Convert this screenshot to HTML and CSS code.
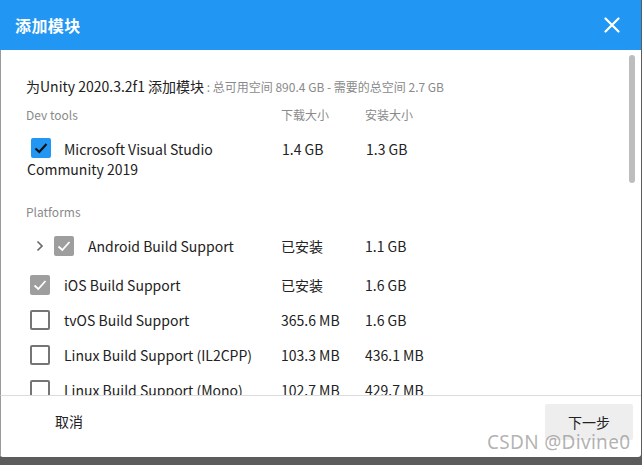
FILE: index.html
```html
<!DOCTYPE html>
<html lang="zh-CN">
<head>
<meta charset="utf-8">
<title>添加模块</title>
<link rel="stylesheet" href="styles.css">
</head>
<body>
<div class="dialog">
  <header class="head">
    <h1 class="title">添加模块</h1>
    <svg class="close" width="16" height="16" viewBox="0 0 16 16"><path d="M1.5 1.5 L14.5 14.5 M14.5 1.5 L1.5 14.5" stroke="#fff" stroke-width="2.2" stroke-linecap="round"/></svg>
  </header>
  <main class="body">
    <div class="scroll">
      <p class="intro">为Unity 2020.3.2f1 添加模块<span class="space"> : 总可用空间 890.4 GB - 需要的总空间 2.7 GB</span></p>
      <div class="row label-row first-label">
        <div class="c-name">Dev tools</div>
        <div class="c-dl">下载大小</div>
        <div class="c-in">安装大小</div>
      </div>
      <div class="row vs-row">
        <div class="c-name"><span class="cb cb-blue"><svg width="20" height="20" viewBox="0 0 20 20"><path d="M4.5 10.5 L8.3 14 L15.5 6" fill="none" stroke="#111" stroke-width="2.2"/></svg></span>Microsoft Visual Studio Community 2019</div>
        <div class="c-dl">1.4 GB</div>
        <div class="c-in">1.3 GB</div>
      </div>
      <div class="row label-row plat-label">
        <div class="c-name">Platforms</div>
      </div>
      <div class="row item android">
        <div class="c-name flexname"><svg class="chev" width="8" height="12" viewBox="0 0 8 12"><path d="M1.5 1.5 L6 6 L1.5 10.5" fill="none" stroke="#666" stroke-width="1.6"/></svg><span class="cb cb-gray"><svg width="20" height="20" viewBox="0 0 20 20"><path d="M4.5 10.5 L8.3 14 L15.5 6" fill="none" stroke="#fff" stroke-width="1.8"/></svg></span>Android Build Support</div>
        <div class="c-dl">已安装</div>
        <div class="c-in">1.1 GB</div>
      </div>
      <div class="row item ios">
        <div class="c-name flexname"><span class="cb cb-gray"><svg width="20" height="20" viewBox="0 0 20 20"><path d="M4.5 10.5 L8.3 14 L15.5 6" fill="none" stroke="#fff" stroke-width="1.8"/></svg></span>iOS Build Support</div>
        <div class="c-dl">已安装</div>
        <div class="c-in">1.6 GB</div>
      </div>
      <div class="row item">
        <div class="c-name flexname"><span class="cb cb-empty"></span>tvOS Build Support</div>
        <div class="c-dl">365.6 MB</div>
        <div class="c-in">1.6 GB</div>
      </div>
      <div class="row item">
        <div class="c-name flexname"><span class="cb cb-empty"></span>Linux Build Support (IL2CPP)</div>
        <div class="c-dl">103.3 MB</div>
        <div class="c-in">436.1 MB</div>
      </div>
      <div class="row item">
        <div class="c-name flexname"><span class="cb cb-empty"></span>Linux Build Support (Mono)</div>
        <div class="c-dl">102.7 MB</div>
        <div class="c-in">429.7 MB</div>
      </div>
    </div>
    <div class="thumb"></div>
  </main>
  <footer class="foot">
    <span class="cancel">取消</span>
    <span class="next">下一步</span>
  </footer>
</div>
<div class="watermark">CSDN @Divine0</div>
</body>
</html>
```
FILE: styles.css
```css
html, body {
  margin: 0;
  padding: 0;
}
body {
  width: 642px;
  height: 465px;
  background: #5c5c5c;
  font-family: "Noto Sans CJK SC", "Noto Sans", sans-serif;
  color: #222;
  position: relative;
  overflow: hidden;
}
.dialog {
  width: 641px;
  height: 457px;
  background: #fff;
  border-radius: 0 0 3px 3px;
  display: flex;
  flex-direction: column;
  overflow: hidden;
}
.head {
  height: 50px;
  flex: none;
  background: #2196f3;
  display: flex;
  align-items: center;
  justify-content: space-between;
  padding: 0 21px 0 15px;
}
.title {
  margin: 0;
  font-size: 16px;
  font-weight: 700;
  color: #fff;
  line-height: 20px;
  letter-spacing: 0.4px;
}
.close {
  display: block;
  margin-top: -1px;
}
.body {
  flex: none;
  height: 345px;
  position: relative;
  overflow: hidden;
  border-left: 1px solid #9a9a9a;
}
.scroll {
  padding: 26px 0 0 25px;
}
.intro {
  margin: 0;
  font-size: 14px;
  line-height: 20px;
  color: #222;
}
.space {
  font-size: 12px;
  color: #8a8a8a;
}
.row {
  display: flex;
  align-items: center;
}
.c-name {
  width: 255px;
  flex: none;
}
.c-dl {
  width: 84px;
  flex: none;
}
.c-in {
  flex: none;
}
.label-row {
  font-size: 12px;
  line-height: 18px;
  color: #8a8a8a;
}
.first-label {
  margin-top: 9px;
}
.plat-label {
  margin-top: 24px;
}
.vs-row {
  margin-top: 15px;
  align-items: flex-start;
  font-size: 14px;
  line-height: 20px;
}
.vs-row .c-name {
  padding-right: 20px;
  box-sizing: border-box;
  margin-left: 1px;
}
.vs-row .cb {
  display: inline-block;
  vertical-align: top;
  margin: 0 13px 0 4px;
  position: relative;
  top: -1px;
}
.cb {
  width: 20px;
  height: 20px;
  border-radius: 2px;
  box-sizing: border-box;
  flex: none;
}
.cb svg {
  display: block;
}
.cb-blue {
  background: #2196f3;
}
.cb-gray {
  background: #9e9e9e;
}
.cb-empty {
  border: 2px solid #757575;
  background: #fff;
}
.item {
  height: 35px;
  font-size: 14px;
  line-height: 20px;
}
.flexname {
  display: flex;
  align-items: center;
  padding-left: 4px;
  box-sizing: border-box;
}
.flexname .cb {
  margin-right: 14px;
}
.android {
  margin-top: 7px;
}
.android .chev {
  margin: 0 10px 0 6px;
}
.ios {
  margin-top: 4px;
}
.thumb {
  position: absolute;
  right: 6px;
  top: 5px;
  width: 6px;
  height: 128px;
  border-radius: 3px;
  background: #bdbdbd;
}
.foot {
  flex: 1;
  border-top: 1px solid #dcdcdc;
  border-left: 1px solid #9a9a9a;
  display: flex;
  align-items: center;
  justify-content: space-between;
  padding: 0 8px 0 54px;
  font-size: 14px;
}
.cancel {
  line-height: 20px;
  margin-top: -11px;
}
.next {
  width: 88px;
  height: 36px;
  background: #eeeeee;
  border-radius: 2px;
  display: flex;
  align-items: center;
  justify-content: center;
  margin-top: -10px;
}
.watermark {
  position: absolute;
  left: 487px;
  top: 429px;
  font-size: 19px;
  line-height: 26px;
  color: rgba(130, 130, 130, 0.62);
  font-family: "Noto Sans", "Noto Sans CJK SC", sans-serif;
  letter-spacing: 0.3px;
}
```
